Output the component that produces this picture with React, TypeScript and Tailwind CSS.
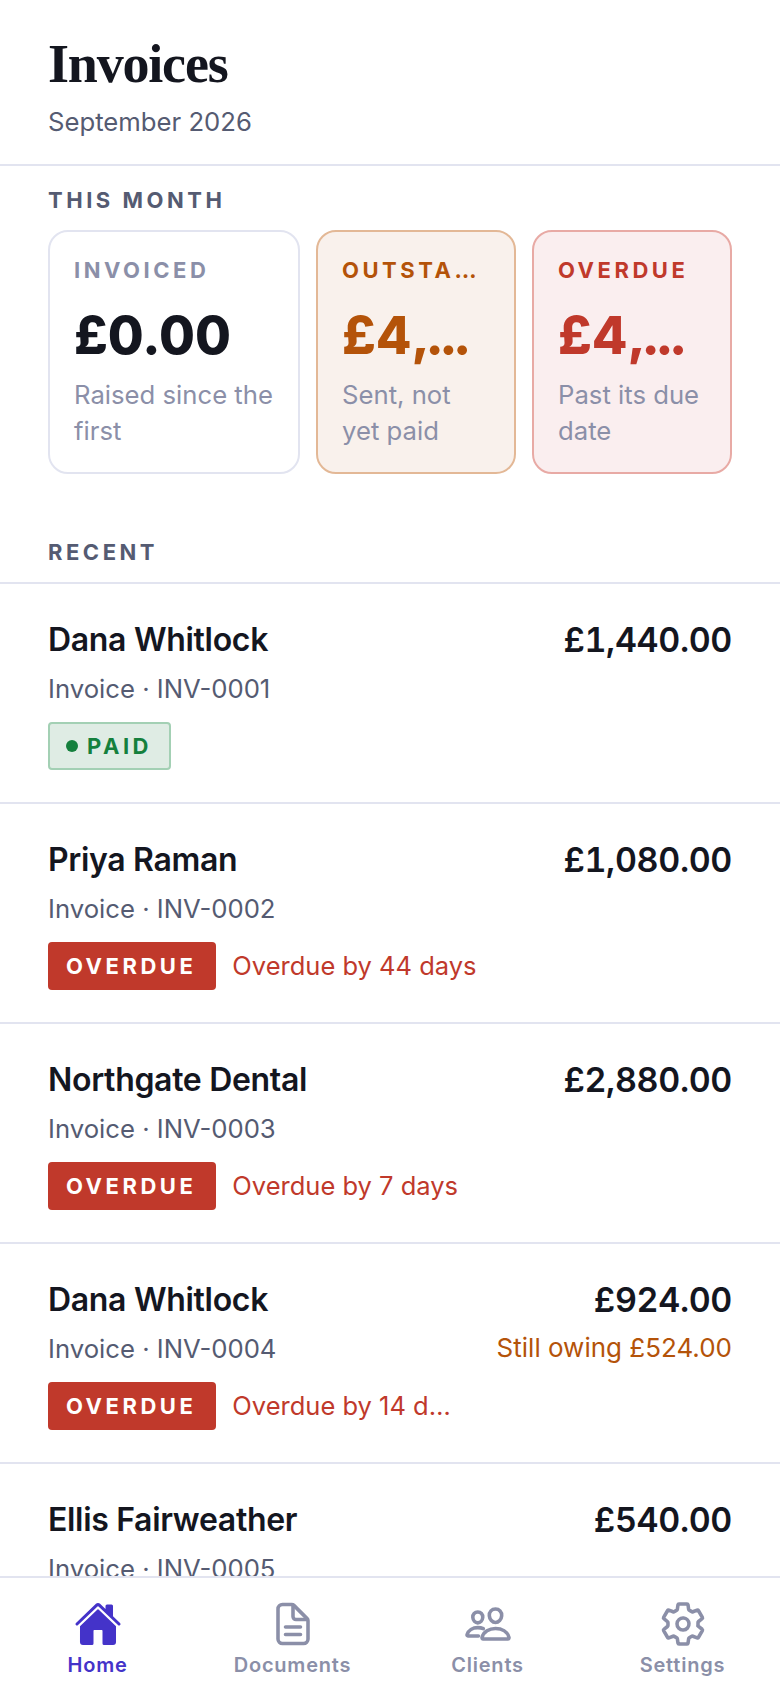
import type { ReactNode } from 'react'
import { IoHome, IoDocumentTextOutline, IoPeopleOutline, IoSettingsOutline } from 'react-icons/io5'

const font = "font-['Inter',sans-serif]"

type Row = {
  name: string
  ref: string
  amount: string
  owing?: string
  status: 'paid' | 'overdue'
  note?: string
}

const rows: Row[] = [
  { name: 'Dana Whitlock', ref: 'INV-0001', amount: '£1,440.00', status: 'paid' },
  { name: 'Priya Raman', ref: 'INV-0002', amount: '£1,080.00', status: 'overdue', note: 'Overdue by 44 days' },
  { name: 'Northgate Dental', ref: 'INV-0003', amount: '£2,880.00', status: 'overdue', note: 'Overdue by 7 days' },
  { name: 'Dana Whitlock', ref: 'INV-0004', amount: '£924.00', owing: 'Still owing £524.00', status: 'overdue', note: 'Overdue by 14 days' },
  { name: 'Ellis Fairweather', ref: 'INV-0005', amount: '£540.00', status: 'overdue', note: 'Overdue by 3 days' },
]

function Stat({ label, value, cut, note, tone }: { label: string; value: string; cut?: boolean; note: string; tone: 'plain' | 'amber' | 'red' }) {
  const box =
    tone === 'plain'
      ? 'w-[252px] shrink-0 bg-white border-[#e2e4f0]'
      : tone === 'amber'
        ? 'flex-1 min-w-0 bg-[#f9f1ec] border-[#e3b896]'
        : 'flex-1 min-w-0 bg-[#faeeef] border-[#e8aaa5]'
  const labelColor = tone === 'plain' ? 'text-[#8b8fa8]' : tone === 'amber' ? 'text-[#b45309]' : 'text-[#c0392b]'
  const valueColor = tone === 'plain' ? 'text-[#14161f]' : tone === 'amber' ? 'text-[#b45309]' : 'text-[#c0392b]'
  return (
    <div className={`${box} h-[244px] rounded-[20px] border-2 pt-[23px] pr-[20px] pl-6`}>
      <div className={`${labelColor} text-[22px] leading-[30px] font-bold tracking-[0.16em] truncate`}>{label}</div>
      <div className={`${valueColor} mt-[17px] text-[52px] leading-[68px] font-extrabold whitespace-nowrap`}>
        {value}
        {cut && <span className="tracking-[-4.5px]">,...</span>}
      </div>
      <div className="mt-[7px] text-[25.7px] leading-[36px] text-[#8b8fa8]">{note}</div>
    </div>
  )
}

function Badge({ status }: { status: Row['status'] }) {
  if (status === 'paid') {
    return (
      <span className="inline-flex h-[48px] shrink-0 items-center gap-[9px] rounded-[4px] border-2 border-[#a3d0b4] bg-[#dfece4] pr-[17px] pl-4 text-[22px] font-bold tracking-[0.16em] text-[#15803d]">
        <span className="size-3 rounded-full bg-[#15803d]" />
        PAID
      </span>
    )
  }
  return (
    <span className="inline-flex h-[48px] shrink-0 items-center rounded-[4px] bg-[#c0392b] pr-[20px] pl-[18px] text-[22px] font-bold tracking-[0.16em] text-white">
      OVERDUE
    </span>
  )
}

function InvoiceRow({ row }: { row: Row }) {
  return (
    <div className="flex h-[220px] shrink-0 items-start gap-[40px] border-b-2 border-[#e2e4f0] px-12 pt-[34px]">
      <div className="min-w-0 flex-1">
        <div className="text-[32px] leading-[44px] font-semibold tracking-[-0.01em] text-[#14161f]">{row.name}</div>
        <div className="mt-[7px] text-[25.7px] leading-[40px] text-[#555b72]">Invoice · {row.ref}</div>
        <div className="mt-[13px] flex items-center gap-4">
          <Badge status={row.status} />
          {row.note && <span className="min-w-0 truncate text-[25.5px] text-[#c0392b]">{row.note}</span>}
        </div>
      </div>
      <div className="shrink-0 text-right">
        <div className="text-[34px] leading-[44px] font-semibold tracking-[-0.01em] tabular-nums text-[#14161f]">{row.amount}</div>
        {row.owing && <div className="mt-[8px] text-[26px] leading-[36px] text-[#b45309]">{row.owing}</div>}
      </div>
    </div>
  )
}

function NavItem({ icon, label, active }: { icon: ReactNode; label: string; active?: boolean }) {
  return (
    <div className="flex flex-1 flex-col items-center">
      <div className="flex h-[48px] items-center justify-center">{icon}</div>
      <div className={`mt-[3px] text-[20px] leading-[28px] font-semibold tracking-[0.04em] ${active ? 'text-[#4433c9]' : 'text-[#8b8fa8]'}`}>{label}</div>
    </div>
  )
}

export default function App() {
  const outline = '[&_*]:[stroke-width:38]'
  return (
    <div className={`${font} flex h-[1688px] w-[780px] flex-col overflow-hidden bg-white`}>
      <header className="h-[166px] shrink-0 border-b-2 border-[#e2e4f0] px-12 pt-[30px]">
        <h1 className="font-['Liberation_Serif',serif] text-[54px] leading-[68px] font-bold tracking-[-0.022em] text-[#14161f]">Invoices</h1>
        <p className="mt-[6px] text-[25.7px] leading-[36px] text-[#555b72]">September 2026</p>
      </header>

      <div className="flex-1 overflow-hidden">
        <section className="px-12 pt-[19px]">
          <h2 className="text-[22px] leading-[30px] font-bold tracking-[0.16em] text-[#555b72]">THIS MONTH</h2>
          <div className="mt-[15px] flex gap-4">
            <Stat label="INVOICED" value="£0.00" note="Raised since the first" tone="plain" />
            <Stat label="OUTSTANDING" value="£4" cut note="Sent, not yet paid" tone="amber" />
            <Stat label="OVERDUE" value="£4" cut note="Past its due date" tone="red" />
          </div>
        </section>

        <h2 className="mt-[63px] px-12 text-[22px] leading-[30px] font-bold tracking-[0.16em] text-[#555b72]">RECENT</h2>
        <div className="mt-[15px] flex flex-col border-t-2 border-[#e2e4f0]">
          {rows.map((row) => (
            <InvoiceRow key={row.ref} row={row} />
          ))}
        </div>
      </div>

      <nav className="flex h-[112px] shrink-0 border-t-2 border-[#e2e4f0] bg-white pt-[22px]">
        <NavItem icon={<IoHome size={48} color="#4433c9" />} label="Home" active />
        <NavItem icon={<IoDocumentTextOutline size={48} color="#8b8fa8" className={outline} />} label="Documents" />
        <NavItem icon={<IoPeopleOutline size={48} color="#8b8fa8" className={outline} />} label="Clients" />
        <NavItem icon={<IoSettingsOutline size={48} color="#8b8fa8" className={outline} />} label="Settings" />
      </nav>
    </div>
  )
}
